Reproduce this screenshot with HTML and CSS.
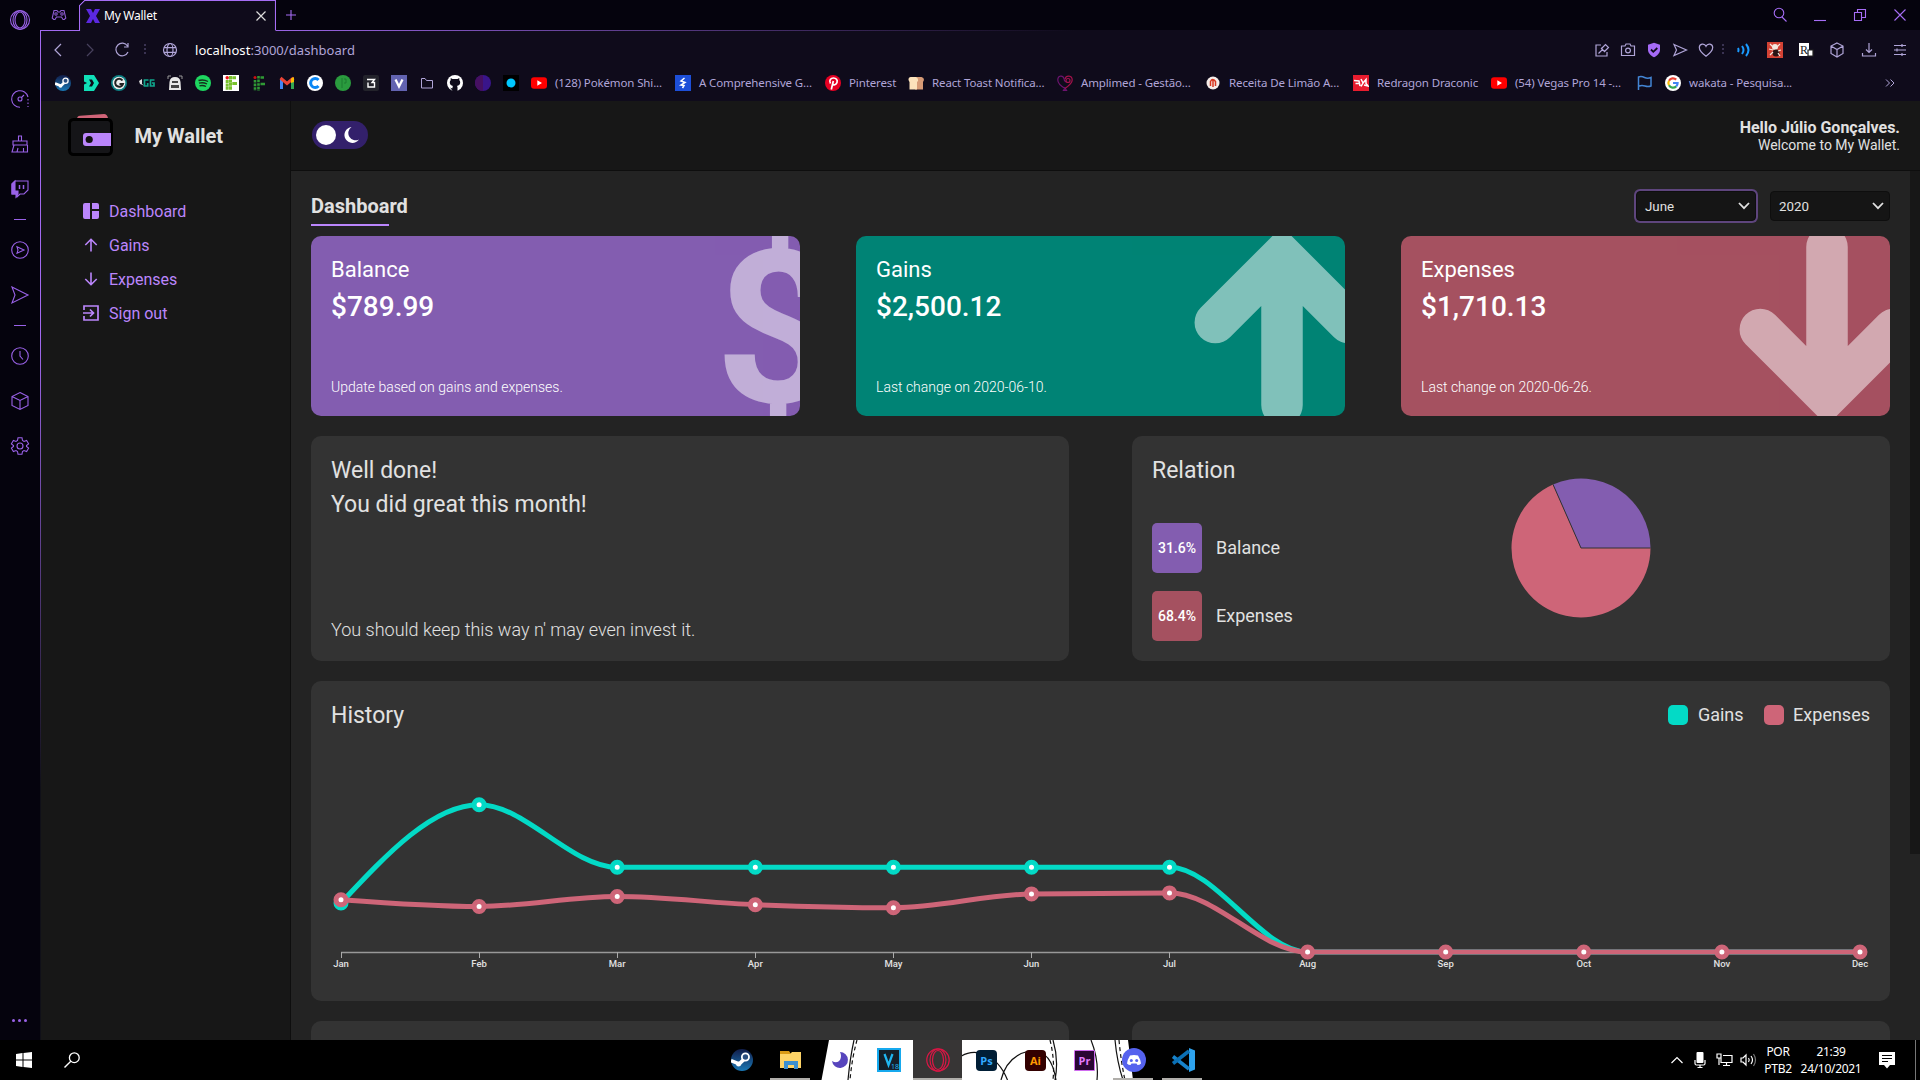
FILE: index.html
```html
<!DOCTYPE html>
<html lang="en">
<head>
<meta charset="utf-8">
<title>My Wallet</title>
<link rel="stylesheet" href="styles.css">
</head>
<body>
<div class="screen">
  <div class="browser">
    <nav class="rail">
      <div class="rail-top"><svg width="22" height="22" viewBox="0 0 22 22"><circle cx="11" cy="11" r="9.5"/><ellipse cx="11" cy="11" rx="5" ry="8"/><ellipse cx="11" cy="11" rx="7" ry="9.3"/></svg></div>
      <div class="slot"><svg width="20" height="20" viewBox="0 0 20 20"><path d="M10 18.300A8.300 8.300 0 1 1 18 8M11.500 8.500L14 6"/><circle cx="10" cy="10" r="2"/><path d="M18 10v8" stroke-dasharray="1.5 2"/></svg></div>
      <div class="slot"><svg width="20" height="20" viewBox="0 0 20 20"><path d="M3 7h14v4H3zM8.5 7V2h3v5M4 11l-2 7h15.5v-7M7 18l1-4M13.500 14v4"/></svg></div>
      <div class="slot"><svg width="20" height="20" viewBox="0 0 20 20"><path d="M5 2h13v9l-4 4h-4l-3 3v-3H2V5z"/><path d="M2 5l3-3v10h3v3l-2 3v-3H2z" fill="currentColor"/><path d="M9.500 6v4M13.500 6v4" stroke-width="1.500"/></svg></div>
      <div class="dash"></div>
      <div class="slot"><svg width="20" height="20" viewBox="0 0 20 20"><circle cx="10" cy="10" r="8.300"/><path d="M7 6.800l1 3.200-1 3.200 7-3.200z"/></svg></div>
      <div class="slot"><svg width="20" height="20" viewBox="0 0 20 20"><path d="M2 2l16 8-16 8 3-8z"/></svg></div>
      <div class="dash"></div>
      <div class="slot"><svg width="20" height="20" viewBox="0 0 20 20"><circle cx="10" cy="10" r="8.300"/><path d="M10 5v5l3 3.500"/></svg></div>
      <div class="slot"><svg width="20" height="20" viewBox="0 0 20 20"><path d="M10 1.500l8 4v9l-8 4-8-4v-9zM2 5.500l8 4 8-4M10 9.500v9"/></svg></div>
      <div class="slot"><svg width="20" height="20" viewBox="0 0 20 20"><circle cx="10" cy="10" r="3"/><path d="M8 1.800h4l.5 2.700 1.500.9 2.600-1 2 3.400-2.100 1.800v.8l2.100 1.800-2 3.400-2.600-1-1.500.9-.5 2.700H8l-.5-2.700-1.500-.9-2.600 1-2-3.400 2.100-1.800v-.8L1.400 7.800l2-3.400 2.600 1 1.500-.9z"/></svg></div>
      <div class="rail-more"><i></i><i></i><i></i></div>
    </nav>
    <div class="window">
      <div class="tabs">
        <svg class="pad" width="16" height="14" viewBox="0 0 16 14"><path d="M3 2.500h3L7 4h2l1-1.500h3l1.800 7.500-1.500 1.500H12L10.500 9h-5L4 11.500H2.700L1.200 10z"/><circle cx="5" cy="6" r="1.200"/><circle cx="11" cy="6" r="1.200"/></svg>
        <div class="tab">
          <svg class="tab-line" width="198" height="32" viewBox="0 0 198 32"><path d="M0 31.500h.5V5.500L5.500.5h191v30"/></svg>
          <svg class="fav" width="14" height="14" viewBox="0 0 14 14"><path d="M0 0h5l2 4 2-4h5l-4 7 4 7H9l-2-4-2 4H0l4-7z" fill="#5b28e0"/></svg>
          <span class="tab-name">My Wallet</span>
          <svg width="12" height="12" viewBox="0 0 12 12"><path d="M1.500 1.500l9 9M10.500 1.500l-9 9" stroke="#ddd" stroke-width="1.200"/></svg>
        </div>
        <svg class="plus" width="12" height="12" viewBox="0 0 12 12"><path d="M6 1v10M1 6h10"/></svg>
        <div class="controls">
          <svg width="16" height="16" viewBox="0 0 16 16"><circle cx="7" cy="6" r="4.800"/><path d="M10 10l4.500 4.500"/></svg>
          <svg width="16" height="16" viewBox="0 0 16 16"><path d="M2 13.500h12"/></svg>
          <svg width="16" height="16" viewBox="0 0 16 16"><path d="M2.500 5.500h7v8h-7zM5.500 5.500v-3h8v8h-4"/></svg>
          <svg width="16" height="16" viewBox="0 0 16 16"><path d="M2.500 2.500l11 11M13.500 2.500l-11 11"/></svg>
        </div>
      </div>
      <div class="toolbar">
        <div class="nav-icons">
          <svg width="16" height="16" viewBox="0 0 16 16"><path d="M11 2L5 8l6 6"/></svg>
          <svg class="off" width="16" height="16" viewBox="0 0 16 16"><path d="M5 2l6 6-6 6"/></svg>
          <svg width="16" height="16" viewBox="0 0 16 16"><path d="M13.500 4A6.300 6.300 0 1 0 14 10M14 1v4h-4"/></svg>
        </div>
        <span class="sep"></span>
        <svg class="globe" width="16" height="16" viewBox="0 0 16 16"><circle cx="8" cy="8" r="6.500"/><ellipse cx="8" cy="8" rx="3" ry="6.500"/><path d="M2 5.700h12M2 10.300h12"/></svg>
        <div class="url"><b>localhost</b>:3000/dashboard</div>
        <div class="actions">
          <svg width="16" height="16" viewBox="0 0 16 16"><path d="M7 3H2v11h11v-4M4.500 11.500L9 7M7 6l4 4M7.500 6.500l4-4 3 3-4 4"/></svg>
          <svg width="16" height="16" viewBox="0 0 16 16"><path d="M1.500 4H5l1-2h4l1 2h3.500v9.500h-13z"/><circle cx="8" cy="8.500" r="2.400"/></svg>
          <svg width="16" height="16" viewBox="0 0 16 16"><path d="M8 .8l6 2v5c0 3.500-3 6-6 7.500-3-1.500-6-4-6-7.500v-5z" fill="#a56af6" stroke="none"/><path d="M5 7.500l2.300 2.300L11.300 6" stroke="#0e0b1a" stroke-width="1.800"/></svg>
          <svg width="16" height="16" viewBox="0 0 16 16"><path d="M2 2.500L14.500 8 2 13.500 4.500 8z"/></svg>
          <svg width="16" height="16" viewBox="0 0 16 16"><path d="M8 14.300C3 10.500 1.300 8 1.300 5.500 1.300 1.500 6.500.8 8 4.300c1.500-3.500 6.700-2.800 6.700 1.200 0 2.500-1.700 5-6.700 8.800z"/></svg>
          <span class="sep"></span>
          <svg class="audio" width="16" height="16" viewBox="0 0 16 16"><path d="M2 6q1 2 0 4M6 4q3 4 0 8M10 2q5 6 0 12" stroke="#1a9bff" stroke-width="2"/></svg>
          <svg class="far" width="16" height="16" viewBox="0 0 16 16"><path d="M0 0h16v16H0z" fill="#d34234" stroke="none"/><circle cx="8" cy="5" r="3" fill="#f4e8df" stroke="none"/><circle cx="9" cy="11" r="3.500" fill="#291414" stroke="none"/><path d="M3 2l3 3M13 2l-3 3M2 7l4 1M3 13l3-3M14 8l-3 1M13 14l-2-3" stroke="#f4e8df"/></svg>
          <svg class="far" width="16" height="16" viewBox="0 0 16 16"><path d="M1 1h10v13H1z" fill="#fff" stroke="none"/><path d="M10 8h5v6h-5z" fill="#fff" stroke="#222"/><text x="2" y="12" font-size="12" font-family="Liberation Serif, serif" fill="#222" stroke="none">R</text></svg>
          <svg class="far" width="16" height="16" viewBox="0 0 16 16"><path d="M8 1l6 3v7.500L8 15l-6-3.500V4zM2 4l6 3.500L14 4M8 7.500V15"/></svg>
          <svg class="far" width="16" height="16" viewBox="0 0 16 16"><path d="M8 1v9M5 7.500l3 3 3-3M1.500 11v3h13v-3"/></svg>
          <svg class="far" width="16" height="16" viewBox="0 0 16 16"><path d="M2 3.500h12M2 8h12M2 12.500h12M10 2v3M5 6.500v3M10 11v3"/></svg>
        </div>
      </div>
      <div class="bookmarks">
        <svg width="16" height="16" viewBox="0 0 16 16"><defs><linearGradient id="steam" x2="0" y2="1"><stop stop-color="#111d4a"/><stop offset="1" stop-color="#1a78b5"/></linearGradient></defs><circle cx="8" cy="8" r="8" fill="url(#steam)"/><path d="M0 8.500l6 2.300L10 7" stroke="#fff" stroke-width="2.600" fill="none"/><circle cx="10.500" cy="5.800" r="2.600" fill="#2a4f80" stroke="#fff" stroke-width="1.300"/><circle cx="5.500" cy="11" r="1.800" fill="#fff"/></svg>
        <svg width="16" height="16" viewBox="0 0 16 16"><path d="M1 0h10l5 8-5 8H1V9.500L4 8 1 6.500z" fill="#10e0b8"/><path d="M6 4.500h3L11 8l-2 3.500H6L8 8z" fill="#0e0b1a"/></svg>
        <svg width="16" height="16" viewBox="0 0 16 16"><circle cx="8" cy="8" r="8" fill="#0b7f83"/><circle cx="8" cy="8" r="6.300" fill="#eee"/><path d="M11.500 5.500A4 4 0 1 0 12 9H8.500" fill="none" stroke="#222" stroke-width="2"/></svg>
        <svg width="16" height="16" viewBox="0 0 16 16"><path d="M0 6l3-2v5l3 2-5-2z" fill="#ddd"/><path d="M9.500 5H5.500v6h3.200V8M15.500 5h-4v6h3.500V8h-2" fill="none" stroke="#10a58c" stroke-width="1.700"/></svg>
        <svg width="16" height="16" viewBox="0 0 16 16"><path d="M1 4V1h3M12 1h3v3" fill="none" stroke="#999"/><path d="M2 15l.5-8Q3 2 8 2t5.500 5l.5 8z" fill="#e8e8e8"/><path d="M5 6h6v2H5zM4 10h8v3H4z" fill="#444"/></svg>
        <svg width="16" height="16" viewBox="0 0 16 16"><circle cx="8" cy="8" r="8" fill="#1ed760"/><path d="M3.500 5.500q5-1.500 9.500 1M4 8.200q4-1.300 8 .8M4.500 10.800q3.500-1 6.500.7" fill="none" stroke="#15301c" stroke-width="1.400"/></svg>
        <svg width="16" height="16" viewBox="0 0 16 16"><path d="M0 0h16v16H0z" fill="#fff"/><path d="M7.500 1v14M4.200 5v10" stroke="#78c12c" stroke-width="3" stroke-dasharray="3 .4"/><path d="M9.300 2.700H13M9.300 8.500H14" stroke="#78c12c" stroke-width="3"/><circle cx="4.200" cy="2.700" r="1.700" fill="#e11"/></svg>
        <svg width="16" height="16" viewBox="0 0 16 16"><path d="M4 5v11M7.500 1v15" stroke="#2f9a35" stroke-width="2.600" stroke-dasharray="2.600 1"/><path d="M9.500 2.500H13M9.500 9H14" stroke="#2f9a35" stroke-width="2.600"/><circle cx="4" cy="2.500" r="1.500" fill="#c11"/></svg>
        <svg width="16" height="16" viewBox="0 0 16 16"><path d="M2.500 14V4" stroke="#4285f4" stroke-width="3"/><path d="M13.500 14V4" stroke="#34a853" stroke-width="3"/><path d="M1.500 3L8 8.500 14.500 3" fill="none" stroke="#ea4335" stroke-width="3"/><path d="M12 3.500l3-1.500v5l-3 1z" fill="#fbbc04"/></svg>
        <svg width="16" height="16" viewBox="0 0 16 16"><circle cx="8" cy="8" r="8" fill="#fff"/><path d="M11.500 5A4.500 4.500 0 1 0 11.500 11" fill="none" stroke="#0a86f5" stroke-width="3"/></svg>
        <svg width="16" height="16" viewBox="0 0 16 16"><circle cx="8" cy="8" r="8" fill="#2a9b3e"/><path d="M7 3v10M9 4h2v4H9" stroke="#1d7a30" fill="none"/></svg>
        <svg width="16" height="16" viewBox="0 0 16 16"><rect width="16" height="16" rx="2" fill="#23232b"/><path d="M4 4.500h7.500L9 7.500h2.500V12H5V7.500" fill="none" stroke="#fff" stroke-width="1.400"/></svg>
        <svg width="16" height="16" viewBox="0 0 16 16"><path d="M0 0h16v16H0z" fill="#6263b0"/><path d="M4.500 4.500l3.500 7 3.500-7" fill="none" stroke="#fff" stroke-width="2.300"/></svg>
        <svg width="16" height="16" viewBox="0 0 16 16"><path d="M2.500 3.500H6l1.500 2h6v7.500h-11z" fill="none" stroke="#b0a5d8"/></svg>
        <svg width="16" height="16" viewBox="0 0 16 16"><circle cx="8" cy="8" r="8" fill="#fff"/><path d="M5.500 16v-3q-2 .5-2.700-1M10.500 16v-3.500c0-1-.3-1.300-.6-1.600 4-.5 3.800-4.500 2.400-5.700V3L10.500 4h-5L3.700 3v2.200C2.300 6.400 2.300 10.400 6 10.900c-.3.300-.5.800-.5 1.600V16z" fill="#0e0b1a"/></svg>
        <svg width="16" height="16" viewBox="0 0 16 16"><circle cx="8" cy="8" r="8" fill="#39158a"/><path d="M8 0a8 8 0 0 0 0 16z" fill="#461061"/></svg>
        <svg width="16" height="16" viewBox="0 0 16 16"><path d="M0 0h16v16H0z" fill="#000"/><circle cx="8" cy="8" r="4.500" fill="#00c8ff"/></svg>
        <div class="mark m1"><svg width="16" height="16" viewBox="0 0 16 16"><rect y="2.200" width="16" height="11.600" rx="3" fill="#f00"/><path d="M6.300 5.300L11 8l-4.700 2.700z" fill="#fff"/></svg><span>(128) Pokémon Shi...</span></div>
        <div class="mark m2"><svg width="16" height="16" viewBox="0 0 16 16"><path d="M0 0h16v16H0z" fill="#1d4fd8"/><path d="M9.500 3L6 6l4 1.500L6 10l3 .5L7.500 13" fill="none" stroke="#fff" stroke-width="1.500"/></svg><span>A Comprehensive G...</span></div>
        <div class="mark m3"><svg width="16" height="16" viewBox="0 0 16 16"><circle cx="8" cy="8" r="8" fill="#e60023"/><path d="M6.300 14.500L8.300 6M5.500 8.500C3.500 5 6 3 8.500 3s4.300 2 3.500 4.500-3.500 3-4.300 1.500" fill="none" stroke="#fff" stroke-width="1.700"/></svg><span>Pinterest</span></div>
        <div class="mark m4"><svg width="16" height="16" viewBox="0 0 16 16"><path d="M7 2h6.500Q16 2.500 16 5l-1 2v7.500H7z" fill="#d79b76"/><path d="M2.500 2H8q2.500 1 2 4L9 7v7.500H1.500V7Q-1 3 2.500 2z" fill="#fce2bb"/></svg><span>React Toast Notifica...</span></div>
        <div class="mark m5"><svg width="16" height="16" viewBox="0 0 16 16"><g fill="none" stroke-width="1.200"><path d="M8 13.500C3 10.500.8 8 .8 5 .8 0 6 0 7 3.500c0 2 1 3 2 3.500M6.500 15.300L8 13l1.500 2.300z" stroke="#6d1470"/><path d="M8 13.500c5-3.500 7.200-5.500 7.200-8.500C15.200 0 9 0 8 4" stroke="#a5124c"/><circle cx="11" cy="5.500" r="2" stroke="#a5124c"/></g></svg><span>Amplimed - Gestão...</span></div>
        <div class="mark m6"><svg width="16" height="16" viewBox="0 0 16 16"><circle cx="8" cy="8" r="6.500" fill="#f5ece8"/><path d="M5.500 11V6.500q2-4 5 0V11M8 4v8" fill="none" stroke="#d8371f" stroke-width="1.500"/></svg><span>Receita De Limão A...</span></div>
        <div class="mark m7"><svg width="16" height="16" viewBox="0 0 16 16"><path d="M0 0h16v16H0z" fill="#e81c2e"/><path d="M1 5.500l5 .5 1 5M2.500 8.500H6M8 4l2 4-2 3.500M10 8l3-3.500v4l2 2.500-4-1" fill="none" stroke="#fff" stroke-width="1.500"/></svg><span>Redragon Draconic</span></div>
        <div class="mark m8"><svg width="16" height="16" viewBox="0 0 16 16"><rect y="2.200" width="16" height="11.600" rx="3" fill="#f00"/><path d="M6.300 5.300L11 8l-4.700 2.700z" fill="#fff"/></svg><span>(54) Vegas Pro 14 -...</span></div>
        <svg width="16" height="16" viewBox="0 0 16 16"><path d="M1.500 15V2q3-1 6 .5t6.500 0V11q-3 1-6 0t-6 0" fill="none" stroke="#4385d4" stroke-width="1.500"/></svg>
        <div class="mark m9"><svg width="16" height="16" viewBox="0 0 16 16"><circle cx="8" cy="8" r="8" fill="#fff"/><g fill="none" stroke-width="2.200"><path d="M11.200 4.600A4.600 4.600 0 0 0 4 5.700" stroke="#ea4335"/><path d="M4 5.700A4.600 4.600 0 0 0 4 10.300" stroke="#fbbc05"/><path d="M4 10.300a4.600 4.600 0 0 0 7.200 1.100" stroke="#34a853"/><path d="M11.200 11.400A4.600 4.600 0 0 0 12.600 8H8" stroke="#4285f4"/></g></svg><span>wakata - Pesquisa...</span></div>
        <svg class="overflow" width="12" height="16" viewBox="0 0 12 16"><path d="M2 4.500L5.500 8 2 11.500M6.500 4.500L10 8l-3.500 3.500"/></svg>
      </div>

      <div class="app">
        <aside class="side">
          <div class="brand">
            <svg width="46" height="44" viewBox="0 0 46 44"><path d="M9 6q0-3 3-3.200L36 1q3 0 4 4v2H9z" fill="#d06478"/><path d="M30 5h10v2H30z" fill="#1fb5a5"/><rect x="1.500" y="6.500" width="42" height="35" rx="4" fill="#151518" stroke="#000" stroke-width="3"/><path d="M18 20h25v13H18q-3 0-3-3v-7q0-3 3-3z" fill="#bb86fc"/><circle cx="21.200" cy="26.500" r="3.600" fill="#111"/></svg>
            <span>My Wallet</span>
          </div>
          <a class="link"><svg width="16" height="16" viewBox="0 0 16 16"><path d="M2 0h5v16H2q-2 0-2-2V2q0-2 2-2zM9 0h5q2 0 2 2v4H9zM9 8h7v6q0 2-2 2H9z" fill="currentColor"/></svg>Dashboard</a>
          <a class="link"><svg width="16" height="16" viewBox="0 0 16 16"><path d="M8 14.500V2.500M2.300 8L8 2.300 13.700 8" fill="none" stroke="currentColor" stroke-width="1.600"/></svg>Gains</a>
          <a class="link"><svg width="16" height="16" viewBox="0 0 16 16"><path d="M8 1.500v12M2.300 8L8 13.700 13.700 8" fill="none" stroke="currentColor" stroke-width="1.600"/></svg>Expenses</a>
          <a class="link"><svg width="16" height="16" viewBox="0 0 16 16"><path d="M1 5V1h14v14H1v-4M0 8h10M7 4.500L10.500 8 7 11.500" fill="none" stroke="currentColor" stroke-width="1.700"/></svg>Sign out</a>
        </aside>
        <div class="page">
          <header class="head">
            <div class="toggle"><i></i><svg width="18" height="18" viewBox="0 0 18 18"><path d="M9.500 1A8 8 0 1 0 17 13.500 7.300 7.300 0 0 1 9.500 1z" fill="#fff"/></svg></div>
            <div class="hello"><strong>Hello Júlio Gonçalves.</strong><span>Welcome to My Wallet.</span></div>
          </header>
          <div class="scroller">
            <main class="content">
              <div class="title-row">
                <h1>Dashboard</h1>
                <div class="selects">
                  <div class="select focus">June<svg width="12" height="8" viewBox="0 0 12 8"><path d="M1 1l5 5.200L11 1"/></svg></div>
                  <div class="select">2020<svg width="12" height="8" viewBox="0 0 12 8"><path d="M1 1l5 5.200L11 1"/></svg></div>
                </div>
              </div>
              <section class="cards">
                <article class="card purple"><h2>Balance</h2><strong>$789.99</strong><small>Update based on gains and expenses.</small><span class="dollar">$</span></article>
                <article class="card teal"><h2>Gains</h2><strong>$2,500.12</strong><small>Last change on 2020-06-10.</small>
                  <svg class="mark-arrow" width="160" height="180" viewBox="0 0 160 180"><path d="M30.300 86.500L97 19.800l66.700 66.700M97 20v149"/></svg></article>
                <article class="card red"><h2>Expenses</h2><strong>$1,710.13</strong><small>Last change on 2020-06-26.</small>
                  <svg class="mark-arrow" width="160" height="180" viewBox="0 0 160 180"><path d="M30.300 93.500L97 160.200l66.700-66.700M97 160V11"/></svg></article>
              </section>
              <section class="row">
                <article class="box message"><h2>Well done!<br>You did great this month!</h2><p>You should keep this way n' may even invest it.</p></article>
                <article class="box relation">
                  <div class="rel-list"><h2>Relation</h2>
                    <div class="rel"><b class="purple">31.6%</b><span>Balance</span></div>
                    <div class="rel"><b class="red">68.4%</b><span>Expenses</span></div>
                  </div>
                  <svg class="pie" width="142" height="142" viewBox="-71 -71 142 142"><path d="M0 0L69.500 0A69.500 69.500 0 1 1 -28 -63.600Z" fill="#ce6578"/><path d="M0 0L-28 -63.600A69.500 69.500 0 0 1 69.500 0Z" fill="#835db0"/><path d="M69.500 0H0L-28 -63.600" fill="none" stroke="#333"/></svg>
                </article>
              </section>
              <section class="box history">
                <div class="history-head"><h2>History</h2><div class="legend"><i class="gain"></i><span>Gains</span><i class="loss"></i><span>Expenses</span></div></div>
                <svg class="chart" width="1540" height="240" viewBox="0 0 1540 240">
                  <path class="axis" d="M10 211.500H1529"/>
                  <path class="ticks" d="M10.500 211v6M148.500 211v6M286.500 211v6M424.500 211v6M562.500 211v6M700.500 211v6M838.500 211v6M976.500 211v6M1114.500 211v6M1252.500 211v6M1390.500 211v6M1528.500 211v6"/>
                  <path class="line gain" d="M10 162C56 112.800 102.100 63.700 148.100 63.700S240.200 126.300 286.200 126.300H838.500C884.600 126.300 930.600 211 976.600 211H1529"/>
                  <g class="dots gain"><circle cx="10" cy="162" r="5"/><circle cx="148.100" cy="63.700" r="5"/><circle cx="286.200" cy="126.300" r="5"/><circle cx="424.300" cy="126.300" r="5"/><circle cx="562.400" cy="126.300" r="5"/><circle cx="700.500" cy="126.300" r="5"/><circle cx="838.500" cy="126.300" r="5"/></g>
                  <path class="line loss" d="M10 158.700C56 162.100 102.100 165.500 148.100 165.500C194.100 165.500 240.200 155.500 286.200 155.500C332.200 155.500 378.300 161.800 424.300 163.700C470.300 165.600 516.400 166.800 562.400 166.800C608.400 166.800 654.500 153.600 700.500 152.900C746.500 152.200 792.500 151.900 838.500 151.900C884.600 151.900 930.600 211 976.600 211H1529"/>
                  <g class="dots loss"><circle cx="10" cy="158.700" r="5"/><circle cx="148.100" cy="165.500" r="5"/><circle cx="286.200" cy="155.500" r="5"/><circle cx="424.300" cy="163.700" r="5"/><circle cx="562.400" cy="166.800" r="5"/><circle cx="700.500" cy="152.900" r="5"/><circle cx="838.500" cy="151.900" r="5"/><circle cx="976.600" cy="211" r="5"/><circle cx="1114.700" cy="211" r="5"/><circle cx="1252.800" cy="211" r="5"/><circle cx="1390.900" cy="211" r="5"/><circle cx="1529" cy="211" r="5"/></g>
                  <g class="months"><text x="10" y="226">Jan</text><text x="148.100" y="226">Feb</text><text x="286.200" y="226">Mar</text><text x="424.300" y="226">Apr</text><text x="562.400" y="226">May</text><text x="700.500" y="226">Jun</text><text x="838.500" y="226">Jul</text><text x="976.600" y="226">Aug</text><text x="1114.700" y="226">Sep</text><text x="1252.800" y="226">Oct</text><text x="1390.900" y="226">Nov</text><text x="1529" y="226">Dec</text></g>
                </svg>
              </section>
              <section class="row"><article class="box"></article><article class="box"></article></section>
            </main>
            <div class="scrollbar"></div>
          </div>
        </div>
      </div>
    </div>
  </div>

  <footer class="taskbar">
    <div class="start">
      <svg width="16" height="16" viewBox="0 0 16 16"><path d="M0 2l6.500-1v6.500H0zM7.500 .9L16 0v7.500H7.500zM0 8.500h6.500V15L0 14zM7.500 8.500H16V16l-8.500-1z" fill="#fff"/></svg>
      <svg width="16" height="16" viewBox="0 0 16 16"><circle cx="10.300" cy="5.700" r="4.900" fill="none" stroke="#fff" stroke-width="1.300"/><path d="M6.800 9.200L.5 15.500" stroke="#fff" stroke-width="1.400"/></svg>
    </div>
    <div class="pinned">
      <svg class="cloth" width="320" height="40" viewBox="0 0 320 40"><path d="M12 0H97V40H4.500zM144.500 0H311l5 40H144.500z" fill="#fff"/><g fill="none" stroke="#111" stroke-width="1.200"><path d="M37 0q-4 18-6 40M144.500 16q10-6 22-2 16 6 24 26M184 40q6-24 28-29 22-3 27 29M236 0q6 20 2 40M274 0q8 20 6 40M298 0q2 22 8 40"/><path d="M40 0q-5 18-7 40M233 0q5 20 3 40M302 0q2 22 6 40" stroke-dasharray="4 3"/></g></svg>
      <div class="task"><svg width="22" height="22" viewBox="0 0 16 16"><circle cx="8" cy="8" r="8" fill="url(#steam)"/><path d="M0 8.500l6 2.300L10 7" stroke="#fff" stroke-width="2.600" fill="none"/><circle cx="10.500" cy="5.800" r="2.600" fill="#2a4f80" stroke="#fff" stroke-width="1.300"/><circle cx="5.500" cy="11" r="1.800" fill="#fff"/></svg></div>
      <div class="task open"><svg width="22" height="20" viewBox="0 0 22 20"><path d="M0 1h9l2 3H0z" fill="#d99a16"/><path d="M0 4h10l2-2h9v16H0z" fill="#fdd367"/><path d="M4 19v-8h14v8h-4v-4H8v4z" fill="#3b8fd0"/></svg></div>
      <div class="task"><svg width="20" height="20" viewBox="0 0 20 20"><path d="M10 2a8 8 0 1 1-8 9q5 3 8-1 2-4 0-8z" fill="#5745bd"/></svg></div>
      <div class="task"><svg width="24" height="24" viewBox="0 0 24 24"><path d="M1 1h22v22H1z" fill="#15202a" stroke="#16a9ee" stroke-width="2"/><path d="M7.500 6l4 11 4-11" fill="none" stroke="#20b7f2" stroke-width="2.200"/><text x="14" y="21" font-size="7" fill="#20b7f2">18</text></svg></div>
      <div class="task active open"><svg width="24" height="24" viewBox="0 0 24 24" fill="none" stroke="#dc1645" stroke-width="1.200"><circle cx="12" cy="12" r="11.200"/><ellipse cx="12" cy="12" rx="5.500" ry="9.500"/><ellipse cx="12" cy="12" rx="8" ry="11"/></svg></div>
      <div class="task"><b class="adobe ps">Ps</b></div>
      <div class="task"><b class="adobe ai">Ai</b></div>
      <div class="task"><b class="adobe pr">Pr</b></div>
      <div class="task open"><svg width="24" height="24" viewBox="0 0 24 24"><circle cx="12" cy="12" r="12" fill="#5562ee"/><path d="M8 7.500q4-1.200 8 0 2.500 4 3 8-1.500 1.500-3.500 1.500l-1-1.500h-5l-1 1.500Q6.500 17 5 15.500q.5-4 3-8z" fill="#fff"/><circle cx="9.300" cy="12.500" r="1.500" fill="#5562ee"/><circle cx="14.700" cy="12.500" r="1.500" fill="#5562ee"/></svg></div>
      <div class="task open"><svg width="24" height="24" viewBox="0 0 24 24"><path d="M18 0l6 2.500v19L18 24z" fill="#2ea3ee"/><path d="M2 8.500L18 21" stroke="#1783cc" stroke-width="3.500"/><path d="M2 15.500L18 3" stroke="#0b70b5" stroke-width="3.500"/></svg></div>
    </div>
    <div class="tray">
      <svg class="t1" width="14" height="10" viewBox="0 0 14 10"><path d="M1.500 8L7 2.500 12.500 8"/></svg>
      <svg class="t2" width="12" height="18" viewBox="0 0 12 18"><rect x="2.500" y="1" width="7" height="11" rx="1" fill="#fff" stroke="none"/><path d="M1 9v3.500q0 1.500 1.500 1.500h7q1.500 0 1.500-1.500V9M6 14v2.500M3.500 16.500h5"/></svg>
      <svg class="t3" width="17" height="16" viewBox="0 0 17 16"><path d="M7 3.500h9v7H5v-5M1 2h4v4H1zM3 6v7M10.500 10.500v3M7 13.500h7"/></svg>
      <svg class="t4" width="17" height="16" viewBox="0 0 17 16"><path d="M1 6h2l3-3v10l-3-3H1zM8.500 6q1.500 2 0 4M11 4q3 4 0 8"/><path d="M13.500 2q4 6 0 12" stroke="#777"/></svg>
      <div class="lang">POR<br>PTB2</div>
      <div class="clock">21:39<br>24/10/2021</div>
      <svg class="note" width="16" height="17" viewBox="0 0 16 17"><path d="M0 0h16v13h-5l-3 3.500L5 13H0z" fill="#fff" stroke="none"/><path d="M3 3.500h10M3 6.500h10M3 9.500h6" stroke="#000"/></svg>
      <span class="peek"></span>
    </div>
  </footer>
</div>
</body>
</html>
```
FILE: styles.css
```css
* { box-sizing: border-box; }
body { margin: 0; background: #000; overflow: hidden; font-family: Roboto, sans-serif; }
svg { display: block; flex: none; }
h1, h2, p { margin: 0; font-weight: 400; }

.screen { width: 1920px; height: 1080px; display: flex; flex-direction: column; }
.browser { height: 1040px; display: flex; background: #05030d; }
.window { flex: 1; min-width: 0; display: flex; flex-direction: column; }

/* Browser side rail */
.rail { width: 41px; display: flex; flex-direction: column; align-items: center; padding: 9px 2px 0 0; color: #9a62e8; position: relative; }
.rail::after { content: ""; position: absolute; right: 0; top: 30px; bottom: 0; width: 1px; background: linear-gradient(#a26af0 0, #a26af0 30%, #101018 75%); }
.rail svg { fill: none; stroke: currentColor; stroke-width: 1.1; }
.rail-top { height: 67px; }
.slot { height: 45.4px; display: flex; align-items: center; }
.dash { height: 15px; width: 12px; display: flex; align-items: center; }
.dash::before { content: ""; width: 12px; height: 1px; background: currentColor; }
.rail-more { margin-top: auto; margin-bottom: 18.5px; display: flex; gap: 3px; }
.rail-more i { width: 3px; height: 3px; border-radius: 50%; background: currentColor; }

/* Tab strip */
.tabs { height: 30px; display: flex; align-items: center; color: #a66df5; }
.tabs svg { fill: none; stroke: currentColor; stroke-width: 1.1; }
.pad { margin-left: 10px; opacity: .85; }
.tab { position: relative; z-index: 1; width: 197px; height: 31px; margin-left: 12px; align-self: flex-start; display: flex; align-items: center; padding: 0 9px 0 7px; background: #0f0b1b; clip-path: polygon(0 5px, 5px 0, 100% 0, 100% 100%, 0 100%); }
.tabs .tab-line { position: absolute; left: 0; top: 0; }
.tab .fav { stroke: none; }
.tab-name { flex: 1; margin-left: 4px; color: #fff; font: 12px "Noto Sans", sans-serif; letter-spacing: -.25px; }
.plus { margin-left: 9px; }
.controls { margin-left: auto; margin-right: 12px; display: flex; gap: 24px; }

/* Address bar */
.toolbar { height: 40px; display: flex; align-items: center; padding-left: 9px; color: #b0a5d8; background: linear-gradient(90deg, #a26af0 0, #a26af0 10%, #0f0b1b 55%) top / 100% 1px no-repeat #0f0b1b; }
.toolbar svg { fill: none; stroke: currentColor; stroke-width: 1.2; }
.nav-icons { display: flex; gap: 16px; }
.off { opacity: .35; }
.sep { width: 2px; height: 12px; margin: 0 7px 0 14px; background: repeating-linear-gradient(#3a3352 0 2px, transparent 2px 4px); }
.globe { margin-left: 9px; }
.url { margin-left: 17px; font: 13px "Noto Sans", sans-serif; letter-spacing: .05px; }
.url b { font-weight: 400; color: #fff; }
.actions { margin-left: auto; margin-right: 12px; display: flex; align-items: center; gap: 10px; }
.actions .sep { margin: 0 -2px; }
.actions .audio { margin-left: 4px; }
.actions .far { margin-left: 5.300px; }
.bookmarks { height: 31px; display: flex; align-items: center; gap: 12px; padding: 0 24px 5px 14px; background: #0f0b1b; color: #b0a5d8; }
.mark { display: flex; align-items: center; gap: 8px; white-space: nowrap; font: 11.500px/16px "Noto Sans", sans-serif; letter-spacing: -.13px; }
.mark span { margin-top: -1px; }
.m1 { width: 132px; }
.m2 { width: 138px; }
.m3 { width: 71px; }
.m4 { width: 137px; }
.m5 { width: 136px; }
.m6 { width: 136px; }
.m7 { width: 126px; }
.m8 { width: 134px; }
.overflow { margin-left: auto; fill: none; stroke: currentColor; }

/* Wallet application */
.app { flex: 1; min-height: 0; display: flex; color: #e1e1e1; }
.side { width: 250px; background: #171717; border-right: 1px solid #0e0e0e; padding: 11px 0 0 27px; }
.brand { display: flex; align-items: center; height: 46px; margin-bottom: 36px; font-size: 20px; font-weight: 700; }
.brand span { margin: 2px 0 0 20.5px; }
.link { display: flex; align-items: center; height: 34px; gap: 10px; padding-left: 15px; font-size: 16px; color: #bb86fc; }
.page { flex: 1; display: flex; flex-direction: column; min-width: 0; }
.head { height: 70px; flex: none; display: flex; justify-content: space-between; align-items: center; padding: 0 20px 2px 21px; background: #171717; border-bottom: 1px solid #0e0e0e; }
.toggle { width: 56px; height: 28px; border-radius: 14px; background: #33206b; display: flex; align-items: center; gap: 6px; padding-left: 4px; }
.toggle i { width: 20px; height: 20px; border-radius: 50%; background: #fff; }
.hello { display: flex; flex-direction: column; margin-top: 2px; text-align: right; font-size: 14px; line-height: 16px; }
.hello strong { font-size: 16px; line-height: 19px; }
.scroller { flex: 1; min-height: 0; display: flex; background: #232323; }
.scrollbar { width: 10px; height: 683px; background: #171717; }
.content { flex: 1; padding: 0 20px; overflow: hidden; }
.title-row { display: flex; justify-content: space-between; height: 65px; }
h1 { align-self: flex-start; margin-top: 20px; font-size: 20px; line-height: 30px; font-weight: 700; }
h1::after { content: ""; display: block; width: 78px; height: 2px; margin-top: 3px; background: #bb86fc; }
.selects { display: flex; gap: 14px; padding-top: 20px; }
.select { width: 120px; height: 30px; display: flex; justify-content: space-between; align-items: center; padding: 0 5px 0 8px; border: 1px solid #0e0e0e; border-radius: 4px; background: #151515; font-size: 13.333px; }
.select.focus { box-shadow: 0 0 0 2px #5e457d; }
.select svg { fill: none; stroke: #e1e1e1; stroke-width: 1.800; }
.cards, .row { display: flex; justify-content: space-between; }
.card { position: relative; overflow: hidden; width: 489px; height: 180px; border-radius: 10px; padding: 20px 20px 19px; display: flex; flex-direction: column; align-items: flex-start; color: #fff; }
.card h2 { font-size: 22px; line-height: 28px; }
.card strong { font-size: 28px; line-height: 42px; margin-top: 2px; font-weight: 500; }
.card small { margin-top: auto; font-size: 14px; line-height: 20px; font-weight: 300; }
.purple { background: #835db0; }
.teal { background: #008375; }
.red { background: #a55160; }
.mark-arrow { position: absolute; right: 0; top: 0; fill: none; stroke: #fff; stroke-width: 41.500; stroke-linecap: round; opacity: .5; }
.dollar { position: absolute; left: 404px; top: 3px; font-size: 214px; line-height: 180px; font-weight: 700; opacity: .5; }
.row { margin-top: 20px; }
.box { width: 758px; height: 225px; border-radius: 10px; background: #333; padding: 20px; }
.box h2 { font-size: 23px; line-height: 34px; margin-top: -2px; }
.message { display: flex; flex-direction: column; justify-content: space-between; }
.message p { font-size: 18px; line-height: 24px; font-weight: 300; margin-bottom: -1px; }
.relation { display: flex; }
.rel-list { width: 358px; }
.rel { display: flex; align-items: center; gap: 14px; height: 50px; margin-top: 35px; font-size: 18px; }
.rel span { margin-top: -2px; }
.rel + .rel { margin-top: 18px; }
.rel b { width: 50px; height: 50px; border-radius: 5px; display: grid; place-items: center; font-size: 14px; font-weight: 500; color: #fff; }
.pie { margin-top: 21px; }
.history { width: 100%; height: 320px; margin-top: 20px; }
.history-head { display: flex; justify-content: space-between; height: 40px; }
.legend { display: flex; align-items: center; height: 28px; font-size: 18px; }
.legend i { width: 20px; height: 20px; border-radius: 5px; margin: 0 9.500px 0 20px; }
.legend span { margin-top: -2px; }
i.gain { background: #03dac6; }
i.loss { background: #ce6578; }
.chart { margin-right: -20px; }
.axis { stroke: #999; stroke-width: 1.500; }
.ticks { stroke: #aaa; }
.line { fill: none; stroke-width: 5; }
.line.gain, .dots.gain { stroke: #03dac6; }
.line.loss, .dots.loss { stroke: #ce6578; }
.dots { fill: #fff; stroke-width: 5; }
.months { fill: #e1e1e1; font-size: 9.500px; font-weight: 500; text-anchor: middle; }

/* Desktop taskbar */
.taskbar { height: 40px; position: relative; display: flex; align-items: center; justify-content: space-between; background: #000; color: #fff; font: 12px "Noto Sans", sans-serif; }
.start { display: flex; gap: 32px; padding-left: 16px; width: 717px; }
.pinned { position: relative; display: flex; height: 40px; }
.cloth { position: absolute; left: 100px; top: 0; }
.task { position: relative; width: 49px; height: 40px; display: grid; place-items: center; }
.task.active { background: #373535; }
.task.open::after { content: ""; position: absolute; left: 4px; right: 5px; bottom: 0; height: 2px; background: #b0aeaa; }
.task.active::after { left: 0; right: 0; }
.adobe { width: 21px; height: 21px; border-radius: 4px; display: grid; place-items: center; font: 700 11px "Open Sans", sans-serif; }
.ps { background: #001e36; color: #31a8ff; }
.ai { background: #330000; color: #ff9a00; }
.pr { background: #2a0634; color: #e07aff; border: 1px solid #d06cf0; border-radius: 1px; }
.tray { margin-left: auto; display: flex; align-items: center; height: 40px; text-align: center; line-height: 17px; letter-spacing: -.3px; }
.tray svg { fill: none; stroke: #fff; stroke-width: 1.200; }
.t2 { margin-left: 10px; }
.t3 { margin-left: 10px; }
.t4 { margin-left: 7px; }
.lang { width: 34px; margin-left: 4px; }
.clock { width: 62px; margin-left: 5px; }
.note { margin-left: 17px; }
.peek { width: 1px; height: 40px; margin: 0 4px 0 20px; background: #777; }
```
